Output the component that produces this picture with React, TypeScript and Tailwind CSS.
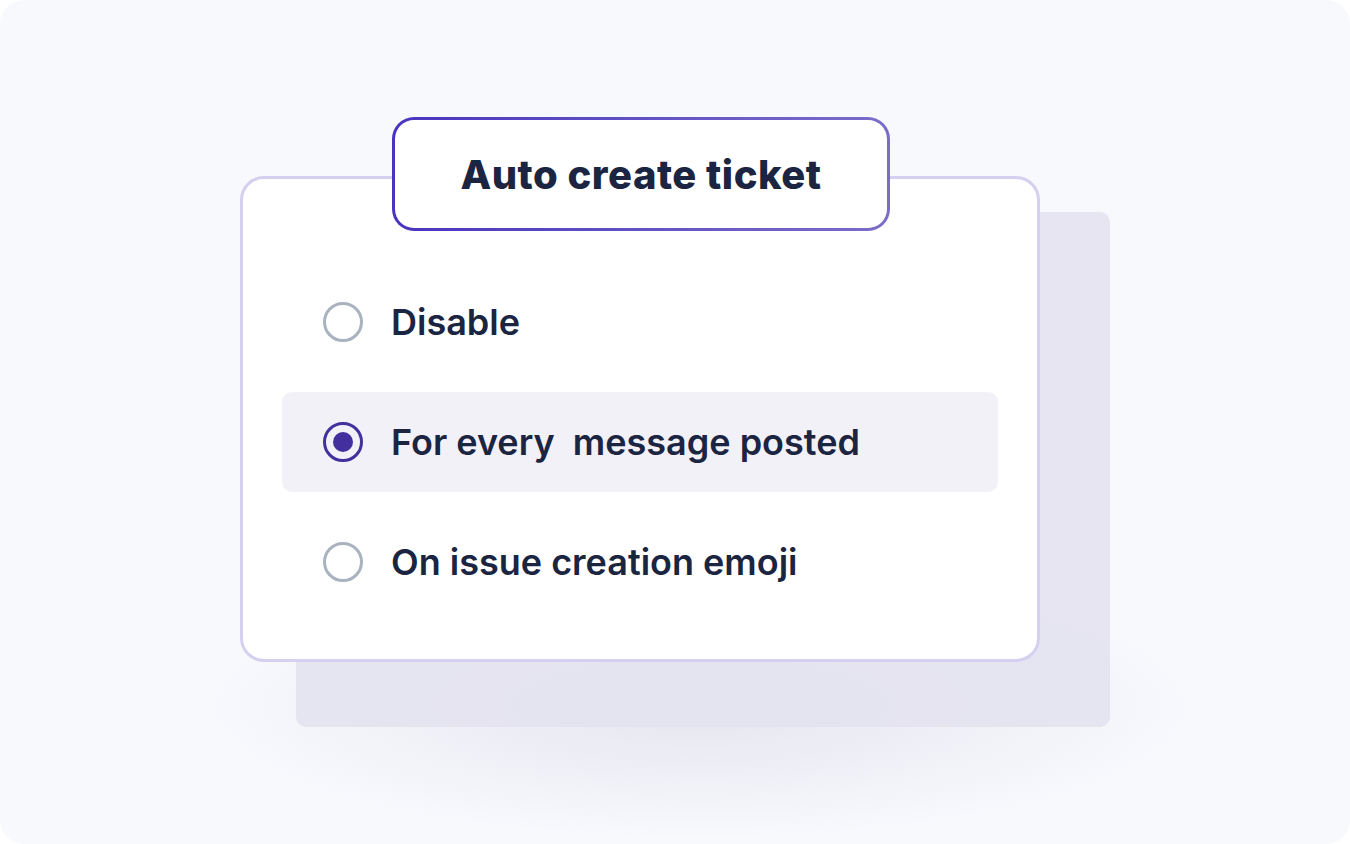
import React from "react";

interface OptionProps {
	label: string;
	selected?: boolean;
}

const Option: React.FC<OptionProps> = ({ label, selected }) => (
	<div
		className={`flex items-center h-[100px] px-[41px] gap-[28px] rounded-[10px] ${
			selected ? "bg-[#f2f1f8]" : ""
		}`}
	>
		<div
			className={`w-[40px] h-[40px] rounded-full border-[3px] flex items-center justify-center shrink-0 ${
				selected ? "border-[#43309e]" : "border-[#a9b3bf]"
			}`}
		>
			{selected && <div className="w-[20px] h-[20px] rounded-full bg-[#43309e]" />}
		</div>
		<span className="whitespace-pre text-[36px] font-semibold text-[#1b2541] leading-none">
			{label}
		</span>
	</div>
);

export default function App() {
	return (
		<div className="w-[1350px] h-[844px] bg-white">
			<div
				className="relative w-full h-full rounded-[24px] bg-[#f8f9fd] flex items-center justify-center overflow-hidden"
				style={{ fontFamily: "Inter, 'Noto Sans', sans-serif" }}
			>
				<div className="absolute left-[200px] top-[570px] w-[1000px] h-[270px] rounded-full bg-[radial-gradient(closest-side,#e5e5ef,rgba(248,249,253,0))]" />
				<div className="relative pt-[60px] pr-[70px] pb-[67px]">
					<div className="absolute left-[56px] top-[96px] w-[814px] h-[515px] rounded-[10px] bg-[#e3e2ef]/90" />
					<div className="relative w-[800px] h-[486px] rounded-[24px] border-[3px] border-[#d5d0f0] bg-white px-[39px] pt-[93px] flex flex-col gap-[20px]">
						<div className="absolute left-1/2 -translate-x-1/2 top-[-62px] ml-[1px] w-[498px] h-[114px] rounded-[22px] p-[3px] bg-gradient-to-r from-[#4a33bf] to-[#7c6cc9]">
							<div className="w-full h-full rounded-[19px] bg-white flex items-center justify-center pt-[2px]">
								<span className="text-[40px] font-extrabold text-[#1b2541] tracking-[0.5px]">
									Auto create ticket
								</span>
							</div>
						</div>
						<Option label="Disable" />
						<Option label="For every  message posted" selected />
						<Option label="On issue creation emoji" />
					</div>
				</div>
			</div>
		</div>
	);
}
